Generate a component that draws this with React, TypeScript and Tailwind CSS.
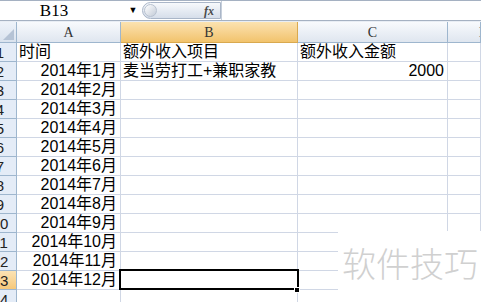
import React from "react";

const months = [
  "2014年1月", "2014年2月", "2014年3月", "2014年4月", "2014年5月", "2014年6月",
  "2014年7月", "2014年8月", "2014年9月", "2014年10月", "2014年11月", "2014年12月",
];

const cellFont = { fontFamily: '"Liberation Sans", "Noto Sans CJK SC", sans-serif' };

function RowHead({ n, active }: { n: number; active?: boolean }) {
  return (
    <div
      className={
        "h-[19px] border-r border-b border-[#9eb6ce] overflow-hidden flex items-center " +
        (active ? "bg-gradient-to-b from-[#fbe3b4] to-[#f6c879]" : "bg-[#e4ecf7]")
      }
    >
      <div className="w-[30px] -ml-[15px] shrink-0 text-center text-[15px] leading-none text-[#222]">{n}</div>
    </div>
  );
}

function Cell({ children, right, className = "" }: { children?: React.ReactNode; right?: boolean; className?: string }) {
  return (
    <div
      className={
        "h-[19px] border-r border-b border-[#d0d7e5] flex items-end pb-[1px] whitespace-nowrap overflow-visible text-[16px] leading-none text-black " +
        (right ? "justify-end pr-[3px] " : "pl-[2px] ") +
        className
      }
    >
      {children}
    </div>
  );
}

export default function App() {
  const rows: { a?: string; b?: string; c?: string }[] = [
    { a: "时间", b: "额外收入项目", c: "额外收入金额" },
    ...months.map((m, i) => (i === 0 ? { a: m, b: "麦当劳打工+兼职家教", c: "2000" } : { a: m })),
    {},
  ];

  return (
    <div className="w-[481px] h-[302px] overflow-hidden bg-white relative" style={cellFont}>
      {/* formula bar */}
      <div className="h-[21px] flex items-stretch border-t border-b border-[#a5b1c2] bg-white">
        <div
          className="w-[124px] flex items-center justify-center pr-[16px] text-[17px] text-black"
          style={{ fontFamily: '"Liberation Serif", serif' }}
        >
          B13
        </div>
        <div className="w-[18px] flex items-center justify-center text-[9px] text-black">▼</div>
        <div className="w-[79px] my-[1px] flex items-center justify-between rounded-l-full border border-[#aab6c8] bg-gradient-to-b from-[#f7f9fc] to-[#d6deea] pr-[6px]">
          <div className="w-[13px] h-[13px] ml-[1px] rounded-full border border-[#b8c2d0] bg-gradient-to-br from-white to-[#c4ccd8]" />
          <span className="text-[12px] italic font-bold text-[#4a4a4a]" style={{ fontFamily: '"Liberation Serif", serif' }}>
            fx
          </span>
        </div>
        <div className="flex-1 border-l border-[#c6cfdb] bg-white" />
      </div>
      <div className="h-[1px] bg-[#e8edf4]" />

      {/* grid */}
      <div className="grid grid-cols-[17px_104px_177px_150px_1fr]">
        {/* column headers */}
        <div className="h-[21px] border-r border-b border-[#9eb6ce] bg-gradient-to-b from-[#eef3fa] to-[#dae3ee] relative">
          <div className="absolute right-[2px] bottom-[2px] w-0 h-0 border-l-[11px] border-l-transparent border-b-[11px] border-b-[#b5c3d5]" />
        </div>
        {["A", "B", "C", "D"].map((l) => (
          <div
            key={l}
            className={
              "h-[21px] border-r border-b flex items-center justify-center text-[14px] text-[#333] " +
              (l === "B"
                ? "bg-gradient-to-b from-[#fbe2b0] to-[#f2c36c] border-[#d9a94f]"
                : "bg-gradient-to-b from-[#f8fafd] to-[#dfe6ef] border-[#9eb6ce]") +
              (l === "D" ? " justify-start pl-[31px] overflow-hidden" : "")
            }
            style={{ fontFamily: '"Liberation Serif", serif' }}
          >
            {l}
          </div>
        ))}

        {rows.map((r, i) => (
          <React.Fragment key={i}>
            <RowHead n={i + 1} active={i === 12} />
            <Cell right={i > 0}>{r.a}</Cell>
            <Cell className="relative">
              {r.b}
              {i === 12 && (
                <>
                  <div className="absolute -left-[2px] -top-[2px] w-[180px] h-[21px] border-2 border-black z-10" />
                  <div className="absolute -right-[3px] -bottom-[4px] w-[6px] h-[6px] bg-black border border-white z-20" />
                </>
              )}
            </Cell>
            <Cell right={i > 0}>{r.c}</Cell>
            <Cell />
          </React.Fragment>
        ))}
      </div>

      {/* watermark */}
      <div className="absolute left-[338px] top-[231px] right-0 bottom-0 bg-white flex items-start pl-[4px] pt-[15px]">
        <span
          className="text-[34px] leading-none text-[#d0d0d0]"
          style={{ fontFamily: '"Noto Sans CJK SC", sans-serif', fontWeight: 300 }}
        >
          软件技巧
        </span>
      </div>
    </div>
  );
}
